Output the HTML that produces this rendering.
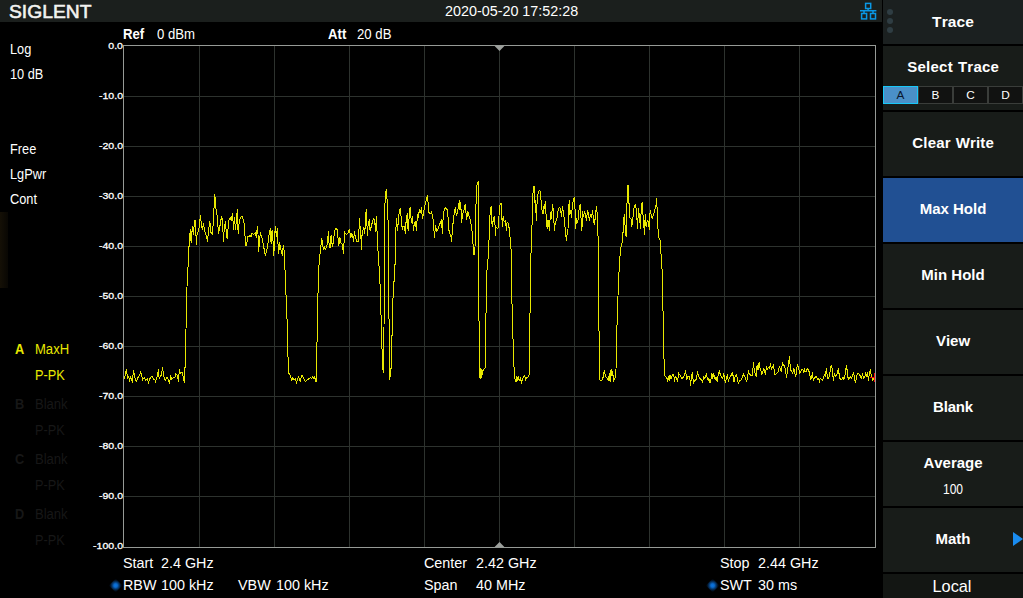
<!DOCTYPE html>
<html><head><meta charset="utf-8"><title>SIGLENT Spectrum Analyzer - Trace</title>
<style>
html,body{margin:0;padding:0;background:#000;}
body{width:1023px;height:598px;overflow:hidden;position:relative;font-family:"Liberation Sans",sans-serif;color:#fff;font-size:14.35px;line-height:16px;}
.abs{position:absolute;white-space:pre;transform-origin:0 50%;}
.t{font-size:14.8px;transform:scaleX(0.89);transform-origin:0 50%;}
#hdr{position:absolute;left:0;top:0;width:882px;height:22px;background:#1b1f1d;}
#logo{left:8.5px;top:2px;font-weight:normal;-webkit-text-stroke:0.55px #f2f2f0;font-size:18px;line-height:20px;letter-spacing:0;color:#f2f2f0;transform-origin:0 50%;transform:scaleX(1.07);}
#time{left:445px;top:3px;}
.yl{position:absolute;left:80px;width:43px;text-align:right;font-size:9.5px;font-weight:normal;-webkit-text-stroke:0.3px #fff;line-height:12px;color:#fff;transform:scaleX(1.11);transform-origin:100% 50%;}
.l{position:absolute;left:10px;white-space:pre;font-size:14.35px;transform:scaleX(0.89);transform-origin:0 50%;}
.dim{color:#171717;}
.yel{color:#e8e800;}
#panel{position:absolute;left:883px;top:0;width:140px;height:598px;background:#000;}
.btn{position:absolute;left:0;width:140px;height:64px;background:#181c19;text-align:center;font-weight:bold;font-size:15px;font-kerning:none;}
.btn span{position:absolute;left:0;width:140px;text-align:center;white-space:pre;}
.sel{background:#215093;}
.tb{position:absolute;top:40px;height:18px;width:35px;background:#111211;border:1px solid #3a3d3a;box-sizing:border-box;font-weight:normal;font-size:11.8px;line-height:17px;text-align:center;}
</style></head><body>
<div id="hdr"></div>
<div style="position:absolute;left:0;top:212px;width:8px;height:76px;background:linear-gradient(to right,#151006,#090703)"></div>
<div id="logo" class="abs">SIGLENT</div>
<div id="time" class="abs">2020-05-20 17:52:28</div>
<svg class="abs" style="left:858px;top:0" width="22" height="22" viewBox="858 0 22 22" fill="none" stroke="#0a98e6" stroke-width="1.5">
<rect x="865.6" y="3.4" width="5.1" height="5.1"/><rect x="861.6" y="13.5" width="5" height="5.4"/><rect x="870.5" y="13.5" width="5" height="5.4"/>
<path d="M868.1 8.5v2M860 10.7h16.4M864 11v2.5M873 11v2.5"/></svg>

<div class="abs t" style="left:123px;top:26px;font-weight:bold;">Ref</div>
<div class="abs t" style="left:157px;top:26px;">0 dBm</div>
<div class="abs t" style="left:328px;top:26px;font-weight:bold;">Att</div>
<div class="abs t" style="left:357px;top:26px;">20 dB</div>

<div class="l" style="top:41px">Log</div>
<div class="l" style="top:66px">10 dB</div>
<div class="l" style="top:141px">Free</div>
<div class="l" style="top:166px">LgPwr</div>
<div class="l" style="top:191px">Cont</div>

<div class="l yel" style="top:341.2px;left:15px;font-weight:bold">A</div>
<div class="l yel" style="top:341.2px;left:35px;transform:scaleX(0.91)">MaxH</div>
<div class="l yel" style="top:367px;left:35px">P-PK</div>
<div class="l dim" style="top:396.2px;left:15px;font-weight:bold">B</div>
<div class="l dim" style="top:396.2px;left:35px;transform:scaleX(0.91)">Blank</div>
<div class="l dim" style="top:422px;left:35px">P-PK</div>
<div class="l dim" style="top:451.2px;left:15px;font-weight:bold">C</div>
<div class="l dim" style="top:451.2px;left:35px;transform:scaleX(0.91)">Blank</div>
<div class="l dim" style="top:477px;left:35px">P-PK</div>
<div class="l dim" style="top:506.2px;left:15px;font-weight:bold">D</div>
<div class="l dim" style="top:506.2px;left:35px;transform:scaleX(0.91)">Blank</div>
<div class="l dim" style="top:532px;left:35px">P-PK</div>

<div class="yl" style="top:40px">0.0</div><div class="yl" style="top:90px">-10.0</div><div class="yl" style="top:140px">-20.0</div><div class="yl" style="top:190px">-30.0</div><div class="yl" style="top:240px">-40.0</div><div class="yl" style="top:290px">-50.0</div><div class="yl" style="top:340px">-60.0</div><div class="yl" style="top:390px">-70.0</div><div class="yl" style="top:440px">-80.0</div><div class="yl" style="top:490px">-90.0</div><div class="yl" style="top:540px">-100.0</div>

<svg class="abs" style="left:0;top:0" width="1023" height="598" viewBox="0 0 1023 598">
<g stroke="#2d322e" stroke-width="1" shape-rendering="crispEdges"><line x1="199.5" y1="45" x2="199.5" y2="547"/><line x1="274.5" y1="45" x2="274.5" y2="547"/><line x1="349.5" y1="45" x2="349.5" y2="547"/><line x1="424.5" y1="45" x2="424.5" y2="547"/><line x1="499.5" y1="45" x2="499.5" y2="547"/><line x1="574.5" y1="45" x2="574.5" y2="547"/><line x1="649.5" y1="45" x2="649.5" y2="547"/><line x1="724.5" y1="45" x2="724.5" y2="547"/><line x1="799.5" y1="45" x2="799.5" y2="547"/><line x1="123" y1="96.5" x2="875" y2="96.5"/><line x1="123" y1="146.5" x2="875" y2="146.5"/><line x1="123" y1="196.5" x2="875" y2="196.5"/><line x1="123" y1="246.5" x2="875" y2="246.5"/><line x1="123" y1="296.5" x2="875" y2="296.5"/><line x1="123" y1="346.5" x2="875" y2="346.5"/><line x1="123" y1="396.5" x2="875" y2="396.5"/><line x1="123" y1="446.5" x2="875" y2="446.5"/><line x1="123" y1="496.5" x2="875" y2="496.5"/></g>
<rect x="123.5" y="45.5" width="752" height="502" fill="none" stroke="#969a96" stroke-width="1" shape-rendering="crispEdges"/>
<defs><radialGradient id="dg" cx="0.5" cy="0.5" r="0.5"><stop offset="0" stop-color="#0b74e0"/><stop offset="0.25" stop-color="#0b70d8" stop-opacity="0.95"/><stop offset="0.55" stop-color="#0a62c0" stop-opacity="0.5"/><stop offset="0.8" stop-color="#084890" stop-opacity="0.15"/><stop offset="1" stop-color="#083c78" stop-opacity="0"/></radialGradient></defs>
<polygon points="108.6,585.5 115.6,578.5 122.6,585.5 115.6,592.5" fill="url(#dg)"/>
<polygon points="705.6,585.5 712.6,578.5 719.6,585.5 712.6,592.5" fill="url(#dg)"/>
<polygon points="494.6,46 504.4,46 499.5,51" fill="#9c9f9c"/>
<polygon points="494.6,547 504.4,547 499.5,542" fill="#9c9f9c"/>
<polyline points="124.0,378.8 124.6,378.8 125.4,374.2 126.5,369.2 127.1,375.1 127.9,378.4 128.8,376.8 129.6,381.8 130.4,376.8 131.3,378.4 132.4,382.6 133.4,370.1 134.4,375.1 135.1,378.4 135.9,380.9 136.7,381.4 137.6,377.6 138.8,376.8 139.6,375.1 140.5,372.1 141.6,374.2 142.4,380.5 143.4,378.4 144.4,377.6 145.5,380.1 146.6,379.3 147.4,378.8 148.4,382.6 149.4,379.7 150.5,377.6 151.8,376.3 152.8,377.2 153.6,379.3 154.7,379.3 155.5,381.8 156.4,378.4 157.2,376.8 157.8,374.2 158.4,369.2 159.1,378.4 160.1,376.8 161.4,375.1 162.5,367.1 163.3,372.6 163.9,376.8 164.7,379.3 165.6,380.5 166.4,377.6 167.5,378.0 168.5,380.5 169.5,382.6 170.2,379.3 170.6,375.1 171.4,379.3 172.7,378.4 173.9,377.6 175.2,376.8 175.8,374.2 176.8,374.7 177.7,377.6 178.5,381.8 179.3,369.2 180.0,374.2 181.0,372.6 182.3,372.6 182.9,375.1 183.5,380.1 184.5,381.8 184.5,368.0 185.5,367.0 186.0,330.0 186.4,300.0 187.5,276.0 188.5,258.0 189.4,238.2 190.4,229.2 191.1,242.9 192.4,226.2 193.3,234.8 194.7,220.1 195.3,220.1 196.4,244.9 197.1,233.5 198.8,230.2 200.4,215.1 201.3,224.2 202.4,229.5 203.4,223.1 204.7,230.8 206.4,236.2 207.5,241.5 208.4,231.5 209.8,221.2 210.8,232.2 212.5,234.2 213.8,214.1 214.5,194.1 215.4,198.7 215.7,208.8 216.5,209.4 217.5,220.1 218.5,233.5 219.8,226.8 221.6,216.1 222.5,220.1 223.4,241.5 224.5,225.5 225.6,221.5 226.5,237.5 227.4,238.2 228.5,221.5 230.1,217.5 231.2,220.1 232.5,213.2 233.6,230.2 234.5,217.5 235.5,229.5 236.8,215.1 237.5,209.2 238.1,233.5 239.2,221.5 240.6,217.5 241.9,216.1 243.0,218.8 244.3,224.2 245.6,245.6 246.6,245.6 247.5,236.9 249.7,236.2 250.0,235.5 251.1,236.8 252.0,232.8 253.3,234.8 255.3,232.8 256.4,237.5 257.4,226.1 258.0,234.2 258.7,251.5 259.6,239.5 260.4,232.1 261.4,236.2 262.7,240.8 264.1,248.9 265.4,256.2 266.7,250.2 267.7,246.2 268.7,236.8 270.3,228.1 271.1,243.5 272.1,230.1 273.0,240.8 273.8,255.6 274.8,234.2 275.4,225.8 276.4,236.8 277.4,228.1 277.8,240.8 278.8,254.2 279.4,242.2 280.5,247.5 281.4,251.5 282.4,256.2 283.2,245.5 284.1,250.2 284.4,255.0 285.0,270.0 285.8,292.0 286.7,305.0 287.6,343.0 288.5,373.0 289.7,374.5 290.9,377.4 291.7,380.3 292.8,378.0 294.0,379.7 295.2,378.6 296.4,382.7 297.5,379.1 298.7,376.8 299.5,380.9 300.4,381.5 301.4,376.2 302.6,375.1 303.4,378.0 304.6,380.3 305.7,381.5 306.9,380.3 308.6,379.1 310.4,377.4 311.6,378.6 312.8,376.8 313.9,379.1 314.5,376.2 315.7,381.5 316.5,381.5 316.6,363.0 317.4,323.5 318.3,279.0 319.4,257.0 320.1,253.6 321.0,245.6 321.7,238.2 322.8,245.6 323.7,250.2 324.6,246.9 325.7,248.9 327.3,244.2 328.4,231.5 329.1,244.2 330.0,248.2 331.1,235.5 332.1,244.2 332.7,246.9 333.7,237.5 335.1,229.5 336.1,228.2 337.1,229.5 338.0,237.5 338.8,245.6 339.8,237.5 341.1,242.9 342.4,244.2 343.4,253.6 344.2,240.2 344.7,232.2 346.4,234.8 348.4,232.2 349.5,228.8 350.1,233.5 350.9,237.5 351.8,233.5 352.7,235.5 353.5,241.5 354.5,230.8 355.4,237.5 356.7,241.5 358.1,241.5 358.9,230.8 359.6,218.1 360.2,229.5 360.8,233.5 361.4,250.2 362.1,233.5 362.9,230.8 363.8,226.8 364.8,233.5 365.6,214.8 366.5,209.2 366.9,222.8 367.4,235.5 368.2,222.8 369.2,220.8 370.1,230.8 371.2,226.8 372.5,221.5 373.9,218.1 374.8,222.8 375.6,232.2 376.3,216.1 376.8,228.2 377.6,240.2 378.1,252.9 379.0,266.0 380.4,291.0 381.6,338.0 382.7,368.0 383.4,372.5 384.0,330.0 384.5,215.0 385.3,196.0 386.3,189.0 387.0,199.0 387.9,209.0 388.8,297.0 389.6,379.5 390.9,372.5 391.9,340.0 393.0,298.5 394.2,278.5 395.2,261.5 395.6,236.2 396.4,218.1 397.4,230.8 398.3,221.5 399.4,210.1 400.4,209.2 401.4,220.1 402.3,229.5 403.4,226.2 404.4,226.8 405.4,233.5 406.3,217.5 407.4,213.4 408.1,230.8 409.0,218.8 410.1,207.4 410.7,216.1 411.7,222.8 412.5,216.1 413.4,230.8 414.4,222.8 415.4,221.5 416.5,230.8 417.4,214.1 418.4,217.5 419.4,209.4 420.5,213.4 421.4,206.8 422.4,218.8 423.4,213.4 424.5,206.8 425.4,203.4 426.4,200.1 427.5,195.0 428.1,203.4 428.8,212.1 429.9,214.1 431.5,212.1 432.5,216.1 433.5,221.5 434.4,237.5 435.5,225.5 436.6,230.8 437.9,229.5 439.5,224.2 440.6,222.8 441.5,219.5 442.4,233.5 443.2,216.1 444.2,210.1 445.1,207.4 446.2,208.8 447.3,209.4 448.2,218.8 448.9,230.2 449.9,233.5 450.9,236.2 451.5,241.5 452.6,226.8 453.6,218.8 454.5,210.8 455.6,207.4 456.2,215.4 457.6,212.1 458.5,205.4 459.6,200.1 460.0,209.8 460.7,202.4 461.6,222.5 462.7,213.8 463.8,211.1 465.1,204.2 466.0,212.5 466.7,219.8 467.8,211.1 468.7,215.1 469.6,217.8 470.7,221.8 471.8,228.5 472.7,239.2 473.4,249.9 474.1,255.3 475.0,247.2 475.8,215.1 476.3,188.4 477.4,183.0 478.3,182.0 478.7,196.4 478.9,300.0 479.3,375.0 479.7,375.1 480.1,378.6 480.9,368.0 481.7,378.0 482.2,373.3 483.2,369.8 484.6,368.6 485.5,367.4 485.8,324.7 486.7,273.0 487.9,261.0 488.3,255.0 488.8,248.6 489.4,224.5 490.5,208.4 491.4,207.1 492.1,226.5 493.2,220.5 494.1,216.5 495.1,225.8 495.4,235.9 496.1,227.2 497.2,228.5 498.1,227.8 498.8,219.2 499.5,207.1 500.4,203.8 501.5,203.4 501.7,215.1 502.5,227.2 503.1,216.5 504.1,221.8 505.5,220.5 506.4,230.5 507.1,221.8 508.2,223.2 509.2,228.5 510.2,239.2 511.1,249.9 511.2,258.0 511.6,289.0 512.7,329.0 513.6,358.0 514.5,377.0 515.0,378.6 516.0,382.1 516.8,376.2 517.6,380.9 518.6,377.4 519.5,380.9 520.3,377.4 521.5,382.7 522.7,378.6 523.8,376.2 524.7,375.1 525.6,379.7 526.8,377.4 528.2,376.8 529.1,374.5 529.9,374.5 530.0,314.0 530.9,255.0 531.7,239.2 532.4,208.4 533.3,186.4 534.4,186.4 534.6,201.8 535.4,201.1 536.4,220.5 537.3,196.4 538.4,192.4 539.5,190.4 540.4,191.7 541.0,199.8 542.1,211.1 543.1,213.8 543.7,207.1 544.7,208.4 545.3,201.1 546.1,215.1 547.1,228.5 548.0,220.5 548.8,224.5 549.5,231.2 550.4,212.5 551.5,219.2 552.4,204.4 553.4,211.1 554.4,230.5 555.5,221.2 556.4,220.5 557.4,215.8 558.4,208.4 559.5,207.8 560.5,208.4 561.4,216.5 562.5,206.4 563.5,212.5 564.5,220.5 565.4,232.5 566.5,240.6 567.5,229.8 568.5,228.5 569.1,199.8 569.8,215.1 570.8,209.8 571.4,217.8 572.5,203.8 573.4,200.4 574.5,197.1 575.2,213.8 575.6,228.5 576.5,217.8 577.4,223.2 578.5,217.8 579.2,207.1 580.1,204.4 580.9,216.5 581.9,230.5 582.5,211.1 583.6,216.5 584.5,211.1 585.5,215.1 586.5,220.5 587.6,209.8 588.5,215.1 589.5,220.5 590.5,214.5 591.6,217.8 592.6,209.8 593.5,221.2 594.6,224.5 595.5,213.8 596.6,206.4 597.2,215.1 597.9,235.9 598.9,236.5 598.9,317.0 599.4,379.0 600.0,380.3 601.7,380.3 603.1,377.4 604.3,370.4 605.2,375.1 606.4,377.4 607.6,378.6 608.5,380.9 609.3,372.7 610.1,381.5 611.1,369.2 612.0,376.2 612.8,371.5 613.4,381.5 614.4,378.6 615.2,378.0 616.0,369.8 616.4,344.0 617.5,310.0 618.4,285.0 619.3,266.0 620.1,255.0 620.7,248.6 621.8,244.6 622.8,237.2 623.5,221.8 624.4,213.8 625.5,233.9 626.4,237.2 626.8,211.1 627.5,185.0 628.4,185.0 628.7,203.1 629.5,203.8 630.0,217.8 631.1,219.2 631.8,226.5 632.7,220.5 633.5,211.1 634.5,205.8 635.4,205.1 636.5,209.8 637.5,229.2 638.5,207.8 639.4,216.5 640.5,228.5 641.4,203.8 642.5,202.4 642.9,213.8 643.8,225.8 644.5,234.5 645.2,214.5 646.1,227.2 647.2,220.5 648.2,221.8 649.5,229.8 650.1,210.4 651.2,215.1 652.3,219.2 653.2,215.1 654.5,211.1 655.9,206.4 656.5,198.4 657.2,209.8 657.9,228.5 659.0,237.9 660.3,240.6 660.8,249.9 661.5,262.0 662.2,272.0 663.2,319.0 664.1,363.0 664.6,375.9 665.9,376.8 666.7,377.6 667.5,380.1 668.4,375.9 669.2,380.9 670.0,375.1 670.9,378.8 671.7,376.8 673.0,374.2 673.8,375.9 674.6,379.7 675.5,376.8 676.7,378.4 677.5,381.8 678.6,373.0 679.6,374.7 680.9,376.8 682.1,378.8 683.4,377.2 684.7,375.1 685.5,370.1 686.1,374.2 686.8,379.7 688.0,375.9 689.3,377.6 689.7,376.8 690.5,385.5 691.1,380.1 691.8,375.9 692.4,372.1 693.0,379.3 693.6,383.9 694.3,380.9 695.5,380.1 696.4,379.3 696.8,375.9 697.6,373.0 698.5,376.3 699.7,378.4 701.0,379.3 701.8,380.1 702.6,382.6 703.5,377.2 704.7,378.4 705.6,375.9 706.4,374.2 707.2,377.6 708.1,380.5 708.9,378.4 710.2,383.4 711.0,379.3 711.8,373.0 712.7,379.3 713.5,373.4 714.3,376.8 715.2,379.7 716.0,376.8 717.3,381.8 718.1,375.1 719.4,371.3 720.2,374.2 721.4,376.8 722.3,378.4 723.1,376.8 723.7,373.0 724.4,378.4 725.4,381.8 726.5,379.3 727.3,374.2 727.9,378.4 728.5,381.8 729.4,377.6 730.6,375.9 731.5,375.1 732.3,372.1 733.1,375.9 734.0,381.8 735.0,377.2 736.2,374.3 737.1,377.2 738.3,383.4 739.6,380.5 740.9,380.5 742.1,378.0 743.4,374.3 744.6,376.8 745.5,377.6 746.5,381.8 747.5,377.6 748.4,371.3 749.6,374.3 750.9,375.5 752.5,375.5 753.4,362.1 754.1,369.2 755.1,373.4 756.3,376.8 757.1,365.1 758.0,370.1 759.2,362.1 759.9,368.0 760.9,370.1 761.8,374.3 763.0,370.9 763.8,368.4 764.7,371.8 765.5,374.7 766.4,366.3 767.2,369.2 768.4,367.6 769.7,368.4 770.5,363.0 771.4,370.1 772.2,367.6 773.5,365.1 774.1,370.1 775.0,374.7 776.0,374.3 777.2,373.0 778.5,371.8 779.3,365.9 780.6,370.1 781.4,370.9 782.5,362.1 783.5,365.1 784.7,366.3 785.6,371.8 786.7,377.6 787.2,372.6 788.5,363.8 789.5,355.9 790.0,364.2 790.8,370.1 791.8,371.8 792.7,373.4 793.5,368.8 794.5,370.1 795.4,376.8 796.4,373.4 797.3,364.2 798.1,366.7 799.0,370.1 799.8,373.4 801.0,370.9 801.9,369.2 803.1,370.1 803.7,373.4 804.4,368.4 805.0,371.8 806.2,371.8 807.3,368.4 808.3,370.1 809.2,371.8 810.0,375.9 810.9,379.3 811.7,376.8 812.4,372.2 812.9,377.6 813.4,380.5 814.2,378.0 815.5,377.2 816.3,376.4 817.5,379.3 818.8,378.4 819.6,382.6 820.2,378.0 821.3,379.3 822.5,380.5 823.4,378.0 824.4,374.3 825.5,375.9 826.3,368.4 826.9,373.4 827.7,378.4 828.8,378.0 829.7,374.3 830.5,368.8 831.3,365.1 832.2,369.2 832.8,374.3 833.4,380.5 834.3,373.4 835.3,376.4 836.4,375.9 837.4,372.6 838.4,368.4 839.1,374.3 839.7,378.0 840.8,379.3 841.8,379.3 843.0,377.6 843.9,379.3 844.7,376.8 845.5,372.6 846.4,365.1 847.2,370.9 848.0,377.6 848.9,379.3 850.1,376.8 851.4,378.4 852.2,376.8 853.5,372.2 854.3,375.9 855.3,382.6 856.4,378.4 857.2,373.8 858.5,373.4 859.8,375.1 860.6,376.8 861.4,379.3 862.5,373.4 863.5,378.0 864.8,377.2 865.6,372.2 866.4,375.9 867.5,373.4 868.5,380.5 869.4,371.8 870.4,370.1 871.0,374.3 871.9,378.0 872.9,380.5 874.0,377.6" fill="none" stroke="#e8e800" stroke-width="1" stroke-linejoin="miter" shape-rendering="crispEdges"/>
<path d="M870 377.5H874M874.5 373V382" stroke="#f01010" stroke-width="1" shape-rendering="crispEdges" fill="none"/>
</svg>

<div class="abs" style="left:123px;top:555px;">Start</div>
<div class="abs" style="left:161px;top:555px;">2.4 GHz</div>
<div class="abs" style="left:123px;top:577px;">RBW</div>
<div class="abs" style="left:161px;top:577px;">100 kHz</div>
<div class="abs" style="left:238px;top:577px;">VBW</div>
<div class="abs" style="left:276px;top:577px;">100 kHz</div>
<div class="abs" style="left:424px;top:555px;">Center</div>
<div class="abs" style="left:476px;top:555px;">2.42 GHz</div>
<div class="abs" style="left:424px;top:577px;">Span</div>
<div class="abs" style="left:476px;top:577px;">40 MHz</div>
<div class="abs" style="left:720px;top:555px;">Stop</div>
<div class="abs" style="left:758px;top:555px;">2.44 GHz</div>
<div class="abs" style="left:720px;top:577px;">SWT</div>
<div class="abs" style="left:758px;top:577px;">30 ms</div>

<div id="panel">
 <div class="btn" style="top:0;height:44px;background:#1b2020"><span style="top:14.2px;left:0px;font-size:15.5px;letter-spacing:0.1px">Trace</span>
  <i style="position:absolute;left:4px;top:9px;width:6px;height:6px;border-radius:3px;background:#2f3d43"></i>
  <i style="position:absolute;left:4px;top:18px;width:6px;height:6px;border-radius:3px;background:#2f3d43"></i>
  <i style="position:absolute;left:4px;top:27px;width:6px;height:6px;border-radius:3px;background:#2f3d43"></i>
 </div>
 <div class="btn" style="top:46px"><span style="top:13px;left:0.2px;letter-spacing:0.25px;word-spacing:0.6px">Select Trace</span>
  <div class="tb" style="left:0;background:#4a90c8;border-color:#18c8f8;color:#0a1830">A</div>
  <div class="tb" style="left:35px">B</div>
  <div class="tb" style="left:70px">C</div>
  <div class="tb" style="left:105px">D</div>
 </div>
 <div class="btn" style="top:112px"><span style="top:22.5px;left:0.2px;letter-spacing:0.18px;word-spacing:0.6px">Clear Write</span></div>
 <div class="btn sel" style="top:178px"><span style="top:22.5px">Max Hold</span></div>
 <div class="btn" style="top:244px"><span style="top:22.5px">Min Hold</span></div>
 <div class="btn" style="top:310px"><span style="top:22.5px">View</span></div>
 <div class="btn" style="top:376px"><span style="top:22.5px;letter-spacing:-0.2px">Blank</span></div>
 <div class="btn" style="top:442px"><span style="top:12.5px">Average</span><span style="top:39.3px;font-weight:normal;font-size:14px;transform:scaleX(0.86)">100</span></div>
 <div class="btn" style="top:508px"><span style="top:22.5px">Math</span>
  <svg style="position:absolute;left:130px;top:24px" width="10" height="14"><polygon points="0,0 10,7 0,14" fill="#1a8cf0"/></svg></div>
 <div class="btn" style="top:574px;height:24px;background:#131613"><span style="top:4.5px;left:-0.6px;font-weight:normal;font-size:17px;transform:scaleX(0.96)">Local</span></div>
</div>
</body></html>
